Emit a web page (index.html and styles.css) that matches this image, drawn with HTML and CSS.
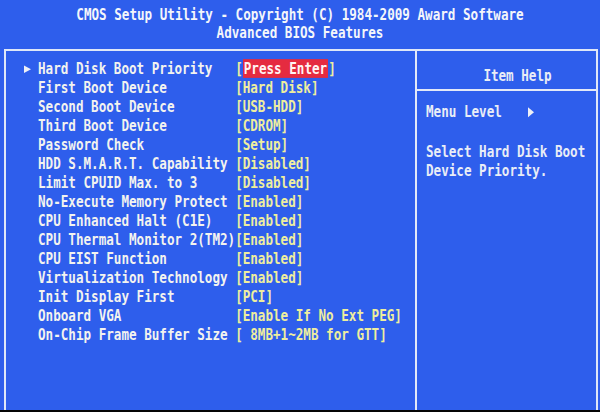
FILE: index.html
```html
<!DOCTYPE html>
<html>
<head>
<meta charset="utf-8">
<link rel="stylesheet" href="styles.css">
</head>
<body>
<div class="screen">
  <header class="title">
    <div class="tline">CMOS Setup Utility - Copyright (C) 1984-2009 Award Software</div>
    <div class="tline">Advanced BIOS Features</div>
  </header>
  <div class="frame">
    <section class="items">
      <div class="row"><span class="mark"><i class="tri"></i></span><span class="label">Hard Disk Boot Priority</span><span class="value">[<span class="hl">Press Enter</span>]</span></div>
      <div class="row"><span class="mark"></span><span class="label">First Boot Device</span><span class="value">[Hard Disk]</span></div>
      <div class="row"><span class="mark"></span><span class="label">Second Boot Device</span><span class="value">[USB-HDD]</span></div>
      <div class="row"><span class="mark"></span><span class="label">Third Boot Device</span><span class="value">[CDROM]</span></div>
      <div class="row"><span class="mark"></span><span class="label">Password Check</span><span class="value">[Setup]</span></div>
      <div class="row"><span class="mark"></span><span class="label">HDD S.M.A.R.T. Capability</span><span class="value">[Disabled]</span></div>
      <div class="row"><span class="mark"></span><span class="label">Limit CPUID Max. to 3</span><span class="value">[Disabled]</span></div>
      <div class="row"><span class="mark"></span><span class="label">No-Execute Memory Protect</span><span class="value">[Enabled]</span></div>
      <div class="row"><span class="mark"></span><span class="label">CPU Enhanced Halt (C1E)</span><span class="value">[Enabled]</span></div>
      <div class="row"><span class="mark"></span><span class="label">CPU Thermal Monitor 2(TM2)</span><span class="value">[Enabled]</span></div>
      <div class="row"><span class="mark"></span><span class="label">CPU EIST Function</span><span class="value">[Enabled]</span></div>
      <div class="row"><span class="mark"></span><span class="label">Virtualization Technology</span><span class="value">[Enabled]</span></div>
      <div class="row"><span class="mark"></span><span class="label">Init Display First</span><span class="value">[PCI]</span></div>
      <div class="row"><span class="mark"></span><span class="label">Onboard VGA</span><span class="value">[Enable If No Ext PEG]</span></div>
      <div class="row"><span class="mark"></span><span class="label">On-Chip Frame Buffer Size</span><span class="value">[ 8MB+1~2MB for GTT]</span></div>
    </section>
    <aside class="help">
      <div class="help-head"><div class="row">Item Help</div></div>
      <div class="help-body">
        <div class="row">Menu Level <span class="level-arrow"><i class="tri"></i></span></div>
        <div class="row gap">Select Hard Disk Boot</div>
        <div class="row">Device Priority.</div>
      </div>
    </aside>
  </div>
</div>
</body>
</html>
```

FILE: styles.css
```css
html, body {
  margin: 0;
  padding: 0;
}
body {
  width: 600px;
  height: 412px;
  overflow: hidden;
  background: #050505;
}
.screen {
  height: 410px;
  background: #2e5eec;
  font-family: "DejaVu Sans Mono", "Liberation Mono", monospace;
  font-weight: bold;
  font-size: 12.6px;
  color: #f3f3ef;
  display: flex;
  flex-direction: column;
}
.title {
  padding-top: 6px;
  text-align: center;
  line-height: 18px;
  color: #f4f6fa;
}
.tline {
  transform: scaleY(1.3);
}
.frame {
  flex: 1;
  margin-top: 7px;
  margin-left: 4px;
  width: 590px;
  border: 2px solid #dfe7f8;
  border-bottom: none;
  display: grid;
  grid-template-columns: 411px 1fr;
}
.items {
  border-right: 2px solid #e3e9f8;
  padding-top: 8px;
}
.row {
  line-height: 19px;
  height: 19px;
  white-space: pre;
  transform: scaleY(1.25);
}
.items .row {
  display: flex;
}
.mark {
  width: 32px;
  padding-left: 18px;
  box-sizing: border-box;
  display: flex;
  align-items: center;
}
.tri {
  display: inline-block;
  width: 0;
  height: 0;
  border-left: 7px solid #eef0f6;
  border-top: 3.5px solid transparent;
  border-bottom: 3.5px solid transparent;
}
.label {
  width: 26ch;
  flex: none;
}
.value {
  color: #eeee9e;
}
.hl {
  background: #e52b40;
  color: #fff4f4;
  padding: 0 1px;
}
.help {
  color: #e9edf6;
}
.help-head {
  height: 40px;
  box-sizing: border-box;
  padding-top: 15px;
  padding-left: 22px;
  text-align: center;
  border-bottom: 2px solid #e3e9f8;
}
.help-body {
  padding-top: 11px;
  padding-left: 9px;
}
.level-arrow {
  display: inline-block;
  margin-left: 19px;
  vertical-align: middle;
}
.level-arrow .tri {
  border-left-width: 6px;
  border-top-width: 4px;
  border-bottom-width: 4px;
  vertical-align: 1px;
}
.gap {
  margin-top: 21px;
}
```
